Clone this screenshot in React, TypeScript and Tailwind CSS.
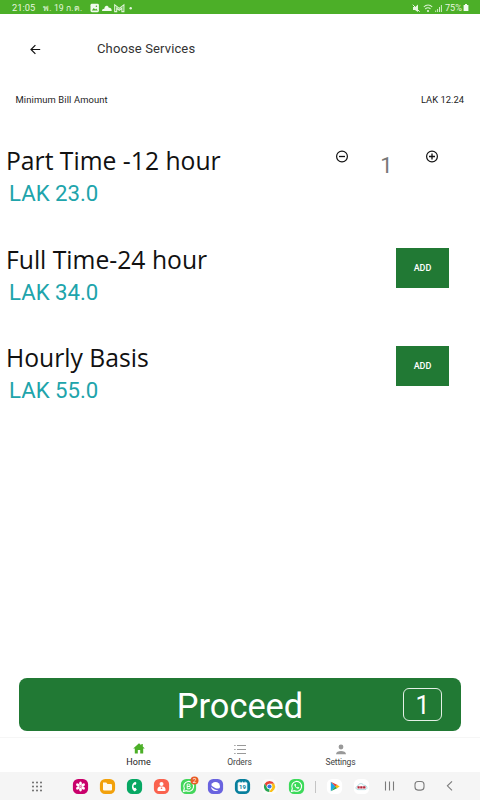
import type { ReactNode } from "react";

const services = [
  { name: "Part Time -12 hour", price: "LAK 23.0", count: 1 },
  { name: "Full Time-24 hour", price: "LAK 34.0", count: 0 },
  { name: "Hourly Basis", price: "LAK 55.0", count: 0 },
];

function StatusBar() {
  return (
    <header className="flex h-[14px] shrink-0 items-center bg-[#4caf28] pl-3 pr-[11px] pt-px text-[9px] leading-[13px] text-[#e6f6df]">
      <span className="w-[31px] whitespace-nowrap text-[9.3px]">21:05</span>
      <span className="w-[47px] whitespace-nowrap pt-px text-[8.6px] tracking-[0.16px]">พ. 19 ก.ค.</span>
      <svg className="h-[10px] w-[44px] shrink-0" viewBox="0 0 44 10">
        <rect x=".5" y=".8" width="8.4" height="8.4" rx="1.4" fill="#f1fbee" />
        <path d="M1.8 7.6 3.8 5l1.4 1.6 1-1 1.6 2z" fill="#4caf28" />
        <circle cx="6.4" cy="3.2" r=".8" fill="#4caf28" />
        <path d="M12 8c0-1.6 1-2.4 2.3-2.3C14.6 2.4 17.8 1.8 18.8 4.7c2-.3 3 1 2.9 3.3z" fill="#f1fbee" />
        <path d="M24.7 8.6V1.8l4.6 3.6 4.6-3.6v6.8h-2V5.2l-2.6 2-2.6-2v3.4z" fill="none" stroke="#dff4d8" strokeWidth="1.1" />
        <circle cx="40.7" cy="5.2" r="1.2" fill="#e6f6df" />
      </svg>
      <div className="ml-auto flex items-center">
        <svg className="h-[10px] w-[33px]" viewBox="0 0 33 10">
          <path d="M1 4v3h2l3 2V1.5L3.2 4z" fill="#e6f6df" />
          <path d="m.7 1.7 7 7" stroke="#e6f6df" strokeWidth="1" />
          <g fill="none" stroke="#dcf3d4" strokeWidth="1.1">
            <path d="M11.8 4c2.4-2.6 6.2-2.6 8.4 0M13.3 6c1.5-1.6 3.8-1.6 5.2 0" />
          </g>
          <circle cx="16" cy="8" r="1.1" fill="#e6f6df" />
          <path d="M23.7 9V7.5M25.6 9V6M27.5 9V4M29.4 9V2" stroke="#d3efc9" strokeWidth="1" />
        </svg>
        <span className="text-[9.2px]">75%</span>
        <svg className="ml-px h-[9px] w-[6px]" viewBox="0 0 6 9">
          <path d="M2 1h2v1h1.4v6H.6V2H2z" fill="#f1fbee" />
        </svg>
      </div>
    </header>
  );
}

function Sign({ plus = false }: { plus?: boolean }) {
  return (
    <button className="block size-[14px]" aria-label={plus ? "Increase" : "Decrease"}>
      <svg viewBox="0 0 14 14" className="size-[14px]" fill="none" stroke="#111">
        <circle cx="7" cy="6.5" r="5.4" strokeWidth="1.2" />
        <path d={plus ? "M4 6.5h6M7 3.5v6" : "M4 6.5h6"} strokeWidth="1.3" />
      </svg>
    </button>
  );
}

function Tab({ label, active = false, children }: { label: string; active?: boolean; children: ReactNode }) {
  return (
    <div className="flex w-[101px] flex-col items-center">
      <svg className={active ? "mt-[4px] h-[14px] w-[14px]" : "mt-[5px] h-[14px] w-[14px]"} viewBox="0 0 14 14">
        {children}
      </svg>
      <span className={active ? "mt-px text-[9px] leading-[11px] tracking-[0.1px] text-[#222]" : "text-[8.5px] leading-[11px] tracking-[-0.12px] text-[#444]"}>
        {label}
      </span>
    </div>
  );
}

function DockIcon({ color, children }: { color: string; children: ReactNode }) {
  return (
    <div className="flex w-[27.1px] shrink-0 justify-center">
      <svg className="h-[19px] w-[21px] overflow-visible" viewBox="-10.5 -9.5 21 19">
        <rect x="-7.6" y="-7.6" width="15.2" height="15.2" rx="5.2" fill={color} />
        {children}
      </svg>
    </div>
  );
}

const petals = [0, 60, 120, 180, 240, 300];
const dots = [-4, 0, 4];

function Dock() {
  return (
    <footer className="flex h-7 shrink-0 items-center bg-[#f5f5f5] pl-[23.5px] pt-px">
      <div className="mr-4 flex w-[27px] justify-center">
        <svg className="size-3" viewBox="-6 -6 12 12" fill="#666">
          {dots.map((y) => dots.map((x) => <circle key={`${x}${y}`} cx={x} cy={y - 0.5} r=".95" />))}
        </svg>
      </div>
      <DockIcon color="#c9006b">
        {petals.map((a) => (
          <ellipse key={a} cx="0" cy="-3" rx="1.35" ry="2" fill="#fff" transform={`rotate(${a})`} />
        ))}
        <circle r="1.1" fill="#f3a8cf" />
      </DockIcon>
      <DockIcon color="#f2a10b">
        <path d="M-4.5-4h3.2l1.3 1.4h3.4q1.1 0 1.1 1.1V3q0 1.1-1.1 1.1h-6.8Q-4.5 4.1-4.5 3z" fill="#fffaf0" />
      </DockIcon>
      <DockIcon color="#07a864">
        <path d="M.8-4.8C-3-3.6-4 2.6.3 4.9l2-1.6-1.2-2-1.4.3c-.9-1-.9-2.3-.1-3.3l1.4.1L2-3.5z" fill="#fff" />
      </DockIcon>
      <DockIcon color="#fa624e">
        <circle cy="-2.5" r="2" fill="#fff" />
        <path d="M-4.1 3.8C-4.1.2-2 0 0 0s4.1.2 4.1 3.8q0 .7-.9.7h-6.4q-.9 0-.9-.7" fill="#fff" />
        <circle cy="1.8" r=".8" fill="#fa624e" />
      </DockIcon>
      <DockIcon color="#43d65b">
        <path d="m-5 5 .8-3A4.9 4.9 0 1 1-2 4.2z" fill="none" stroke="#fff" strokeWidth="1.1" />
        <path d="M-1.3-2.4v4.7H.5q1.4 0 1.4-1.3T.5-.1h-1.8H.3q1.2 0 1.2-1.1T.3-2.4z" fill="none" stroke="#fff" strokeWidth=".9" />
        <circle cx="6" cy="-6" r="4" fill="#e95b24" />
        <text x="6" y="-3.7" textAnchor="middle" fontSize="6.5" fill="#fff">2</text>
      </DockIcon>
      <DockIcon color="#6963df">
        <circle r="4.5" fill="#fff" />
        <path d="M-6-2.8C-3.6 2.2 2 4 6 2" fill="none" stroke="#6963df" strokeWidth="1.5" />
      </DockIcon>
      <DockIcon color="#087f9d">
        <path d="M-4.4-3.7h8.8v6.9q0 1.2-1.2 1.2h-6.4q-1.2 0-1.2-1.2zM-2.7-5v2M0-5v2M2.7-5v2" fill="#fff" stroke="#fff" strokeWidth=".7" />
        <text y="2.8" textAnchor="middle" fontSize="6" fontWeight="700" fill="#087f9d">19</text>
      </DockIcon>
      <DockIcon color="#fafafa">
        <circle r="5.6" fill="#fff" />
        <path d="M-4.8-2.8A5.6 5.6 0 0 1 4.9-2.7H0L-2.4 1.3z" fill="#e94335" />
        <path d="M-4.8-2.8-2.2 1.5 0 2.7-.2 5.6A5.6 5.6 0 0 1-4.8-2.8" fill="#26a452" />
        <path d="M4.9-2.7A5.6 5.6 0 0 1-.2 5.6L2.4 1.2 1.8-2.7z" fill="#fbc116" />
        <circle r="2.8" fill="#fff" />
        <circle r="2.1" fill="#3478e5" />
      </DockIcon>
      <DockIcon color="#3cda5a">
        <path d="m-5 5 .8-3A4.9 4.9 0 1 1-2 4.2z" fill="none" stroke="#fff" strokeWidth="1.1" />
        <path d="M-1.8-2.4C-3-1 0 3 2.2 2.1q1-.6.4-1.2L1.4.3l-.8.7Q-.6.5-.9-.6l.6-.8-.5-1.1z" fill="#fff" />
      </DockIcon>
      <div className="flex w-[11px] shrink-0 justify-center">
        <span className="h-3 w-px bg-[#c4c4c4]" />
      </div>
      <DockIcon color="#fff">
        <path d="M-3.7-4.8V4.8L1 0z" fill="#19a8e8" />
        <path d="M-3.7-4.8 3-1.5 1 .3z" fill="#e84338" />
        <path d="M-3.7 4.8 3 1.5 1-.3z" fill="#2ba653" />
        <path d="M2.5-1.8 5.2 0 2.5 1.8.7 0z" fill="#fbbc15" />
      </DockIcon>
      <DockIcon color="#fff">
        <path d="M-3.5 3.1c-2.7 0-2.6-3.4-.2-3.4C-3-3.4 1-3.7 2-1.3 5.8-1.8 6.8 3.1 3.3 3.1z" fill="#fff" stroke="#8fcbd2" strokeWidth=".7" />
        <path d="M-4-.3h2.2v2.3h-2.2zM-1.3-.3h2.4v2.3h-2.4zM1.6-.3h2.4v2.3H1.6z" fill="#b3263a" />
      </DockIcon>
      <svg className="h-5 w-[87px] shrink-0" viewBox="0 0 87 20" fill="none" stroke="#7b7b7b" strokeWidth="1.1">
        <path d="M9.5 4.5v9M13.5 4.5v9M17.5 4.5v9" />
        <rect x="39" y="4.5" width="9" height="8.6" rx="3" />
        <path d="m76 4.3-4.6 4.5 4.6 4.5" />
      </svg>
    </footer>
  );
}

export default function App() {
  return (
    <div className="flex h-[800px] w-[480px] flex-col overflow-hidden bg-white font-[Roboto,'Noto_Sans',sans-serif] text-[#222]">
      <StatusBar />
      <div className="flex h-[70px] shrink-0 items-center pl-[30px]">
        <svg className="size-[11px]" viewBox="0 0 11 11" fill="none" stroke="#111" strokeWidth="1.2">
          <path d="M10.2 5.5H1M5.4 1.1 1 5.5l4.4 4.4" />
        </svg>
        <h1 className="ml-14 text-[13px] leading-4 tracking-[0.13px] text-[#333]">Choose Services</h1>
      </div>
      <div className="flex h-[30px] shrink-0 items-center justify-between px-4 pt-[2px] text-[9.4px]">
        <span className="-ml-[0.5px] tracking-[0.12px]">Minimum Bill Amount</span>
        <span>LAK 12.24</span>
      </div>
      <main className="flex-1 pt-[30px]">
        {services.map((service) => (
          <section key={service.name} className="flex h-[98.5px] justify-between pl-[6px] pr-[31px]">
            <div>
              <h2 className="font-['Open_Sans',sans-serif] text-[24.7px] leading-[34px] text-[#111]">{service.name}</h2>
              <p className="pl-[3px] text-[22.2px] leading-[30px] text-[#20a4ab]">{service.price}</p>
            </div>
            {service.count ? (
              <div className="-mr-px flex w-[125px] justify-between pl-[10px] pr-[11px] pt-[6px]">
                <Sign />
                <span className="-ml-px pt-[3px] text-[22px] leading-[26px] text-[#777]">{service.count}</span>
                <Sign plus />
              </div>
            ) : (
              <button className="mt-[5px] h-10 w-[53px] bg-[#217934] pt-[2px] text-[9px] font-medium text-white">ADD</button>
            )}
          </section>
        ))}
      </main>
      <div className="mx-[19px] mb-[6px] grid h-[53px] shrink-0 grid-cols-[1fr_auto_1fr] items-center rounded-[8px] bg-[#217934] text-white">
        <span className="col-start-2 pt-[3px] text-[34.4px] leading-[50px]">Proceed</span>
        <span className="mr-[19px] flex h-[33px] w-[39px] items-center justify-center justify-self-end rounded-[6px] border-[1.5px] border-[#e4f0e6] pt-[3px] text-[25px]">1</span>
      </div>
      <nav className="flex h-[35px] shrink-0 justify-center border-t border-[#f6f6f6] pr-px">
        <Tab label="Home" active>
          <path d="M7 1.2 1.2 6.5h1.6v5h3V8h2.4v3.5h3v-5h1.6L10.8 4.6V2H9.3v1.3z" fill="#4caf28" />
        </Tab>
        <Tab label="Orders">
          <path d="M4 2.5h9M4 6.5h9M4 10.5h9M1.2 2.5h1.4M1.2 6.5h1.4M1.2 10.5h1.4" stroke="#999" />
        </Tab>
        <Tab label="Settings">
          <circle cx="7" cy="4" r="2.4" fill="#999" />
          <path d="M2 11.2c0-4.4 10-4.4 10 0z" fill="#999" />
        </Tab>
      </nav>
      <Dock />
    </div>
  );
}
